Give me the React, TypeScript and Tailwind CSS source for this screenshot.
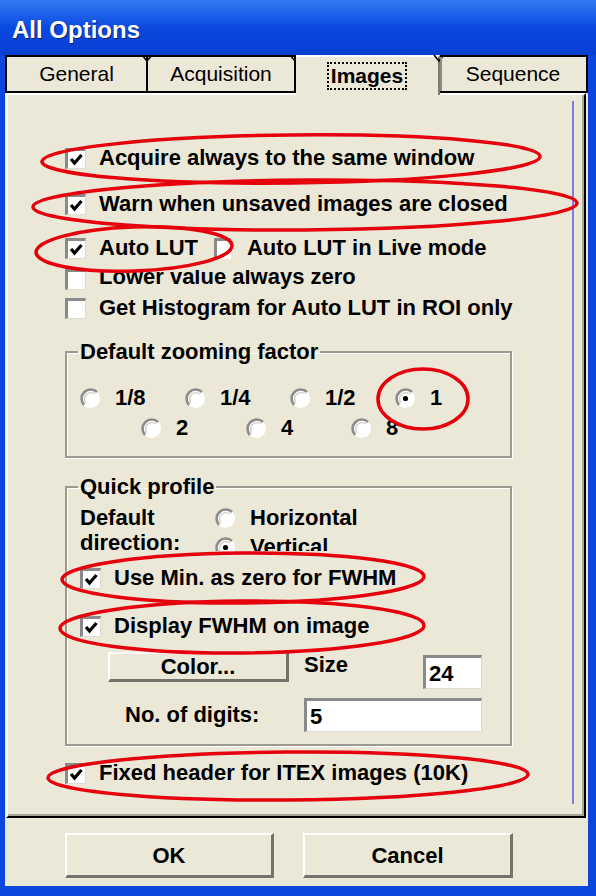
import React from 'react';

const Check = ({ checked = true }: { checked?: boolean }) => (
  <div className="w-[21px] h-[21px] shrink-0 bg-white border-t-[3px] border-l-[3px] border-r border-b border-[#8a8a8a] border-r-[#dedbd0] border-b-[#dedbd0] flex items-center justify-center">
    {checked && (
      <svg width="15" height="15" viewBox="0 0 15 15">
        <path d="M2 7 L5.5 11 L12.5 3" fill="none" stroke="#000" strokeWidth="3.2" />
      </svg>
    )}
  </div>
);

const Radio = ({ on = false }: { on?: boolean }) => (
  <svg width="21" height="21" viewBox="0 0 21 21" className="shrink-0">
    <circle cx="10.5" cy="10.5" r="9.5" fill="#fff" />
    <path d="M17 4 A9.2 9.2 0 0 0 4 17" fill="none" stroke="#8c8c8c" strokeWidth="2.6" />
    <path d="M15 6 A6.4 6.4 0 0 0 6 15" fill="none" stroke="#d2d0c6" strokeWidth="1.4" />
    {on && <circle cx="10.5" cy="10.5" r="2.6" fill="#000" />}
  </svg>
);

const Row = ({ label, checked = true, className = '' }: { label: string; checked?: boolean; className?: string }) => (
  <div className={`flex items-center gap-[13px] h-[24px] ${className}`}>
    <Check checked={checked} />
    <span className="leading-[24px] whitespace-nowrap">{label}</span>
  </div>
);

const Notch = () => (
  <svg width="12" height="8" viewBox="0 0 12 8" className="absolute -right-[7px] -top-[2px]">
    <path d="M1 0 L6 6 L11 0" fill="none" stroke="#000" strokeWidth="1.6" />
  </svg>
);

const Opt = ({ label, on = false }: { label: string; on?: boolean }) => (
  <div className="w-[105px] flex items-center gap-[14px]">
    <Radio on={on} />
    <span className="leading-[22px]">{label}</span>
  </div>
);

export default function App() {
  return (
    <div className="relative w-[596px] h-[896px] overflow-hidden bg-[#0b47dc] font-['Liberation_Sans',Arial,sans-serif] text-black">
      {/* Title bar */}
      <div className="h-[55px] pl-[12px] pt-[16px] bg-gradient-to-b from-[#3479f4] via-[#0a48e0] to-[#083fd2]">
        <span className="text-[24px] leading-[28px] font-bold text-white [text-shadow:1px_1px_0_#0a2270]">All Options</span>
      </div>

      {/* Client area */}
      <div className="ml-[5px] mr-[8px] h-[831px] bg-[#ebe8d8] flex flex-col">
        {/* Tabs */}
        <div className="flex h-[38px] relative z-10">
          <div className="relative w-[143px] border-2 border-black flex items-center justify-center text-[21px]">
            <span>General</span>
            <Notch />
          </div>
          <div className="relative w-[148px] border-2 border-l-0 border-black flex items-center justify-center text-[21px]">
            <span>Acquisition</span>
            <Notch />
          </div>
          <div className="relative w-[144px] h-[40px] border-t-2 border-r-2 border-t-white border-r-[#7d7b70] bg-[#ebe8d8] flex items-center justify-center">
            <span className="text-[21px] font-bold leading-[24px] px-[2px] border-2 border-dotted border-black">Images</span>
            <Notch />
          </div>
          <div className="relative w-[148px] border-2 border-l-0 border-black flex items-center justify-center text-[21px] shadow-[inset_2px_0_0_#8d8b80]">
            <span>Sequence</span>
          </div>
        </div>

        {/* Tab page */}
        <div className="ml-[1px] mr-[2px] h-[725px] border-t-2 border-l-2 border-white border-r-2 border-b-2 border-r-black border-b-black shadow-[inset_-2px_-2px_0_#a9a699] flex text-[22px] font-bold">
          <div className="flex-1 flex flex-col pl-[57px]">
            <Row label="Acquire always to the same window" className="mt-[51px]" />
            <Row label="Warn when unsaved images are closed" className="mt-[22px]" />
            <div className="mt-[20px] flex items-center h-[24px]">
              <Check />
              <span className="ml-[13px] leading-[24px]">Auto LUT</span>
              <div className="ml-[16px] w-[17px] h-[21px] bg-white border-l-[3px] border-t-[3px] border-[#8a8a8a]" />
              <span className="ml-[16px] leading-[24px] whitespace-nowrap">Auto LUT in Live mode</span>
            </div>
            <div className="mt-[7px] flex items-center gap-[13px] h-[24px]">
              <Check checked={false} />
              <div className="h-[19px] overflow-hidden flex items-end">
                <span className="leading-[24px] whitespace-nowrap">Lower value always zero</span>
              </div>
            </div>
            <Row label="Get Histogram for Auto LUT in ROI only" checked={false} className="mt-[5px]" />

            {/* Default zooming factor */}
            <fieldset className="mt-[20px] w-[447px] border-2 border-[#9c9a90] shadow-[1px_1px_0_#fff,inset_1px_1px_0_#fff] pb-[17px]">
              <legend className="ml-[11px] px-[2px] leading-[24px]">Default zooming factor</legend>
              <div className="mt-[23px] h-[22px] flex pl-[13px]">
                <Opt label="1/8" />
                <Opt label="1/4" />
                <Opt label="1/2" />
                <Opt label="1" on />
              </div>
              <div className="mt-[8px] h-[22px] flex pl-[74px]">
                <Opt label="2" />
                <Opt label="4" />
                <Opt label="8" />
              </div>
            </fieldset>

            {/* Quick profile */}
            <fieldset className="mt-[17px] w-[447px] border-2 border-[#9c9a90] shadow-[1px_1px_0_#fff,inset_1px_1px_0_#fff] pb-[12px]">
              <legend className="ml-[11px] px-[2px] leading-[24px]">Quick profile</legend>
              <div className="mt-[7px] h-[47px] flex items-start pl-[13px]">
                <div className="w-[135px] leading-[25px] -mt-[1px]">
                  <div>Default</div>
                  <div>direction:</div>
                </div>
                <div className="h-[45px] overflow-hidden">
                  <div className="h-[24px] flex items-center gap-[14px]">
                    <Radio />
                    <span className="leading-[24px]">Horizontal</span>
                  </div>
                  <div className="mt-[5px] h-[24px] flex items-center gap-[14px]">
                    <Radio on />
                    <span className="leading-[24px]">Vertical</span>
                  </div>
                </div>
              </div>
              <div className="pl-[13px]">
                <Row label="Use Min. as zero for FWHM" className="mt-[13px]" />
                <Row label="Display FWHM on image" className="mt-[24px]" />
              </div>
              <div className="mt-[14px] flex items-start pl-[41px]">
                <button className="w-[181px] h-[30px] bg-[#ebe8d8] border-t-2 border-l-2 border-white border-r-[3px] border-b-[3px] border-r-[#74726a] border-b-[#74726a] font-bold leading-[24px]">
                  Color...
                </button>
                <div className="ml-[15px] w-[119px] leading-[24px] mt-[1px]">Size</div>
                <div className="mt-[3px] w-[59px] h-[34px] bg-white border-t-[3px] border-l-[3px] border-[#8a8a8a] border-r border-b border-r-[#dedbd0] border-b-[#dedbd0] pl-[3px] flex items-center">
                  24
                </div>
              </div>
              <div className="mt-[9px] h-[34px] flex items-center pl-[58px]">
                <div className="w-[179px] leading-[24px]">No. of digits:</div>
                <div className="w-[178px] h-[34px] bg-white border-t-[3px] border-l-[3px] border-[#8a8a8a] border-r border-b border-r-[#dedbd0] border-b-[#dedbd0] pl-[3px] flex items-center">
                  5
                </div>
              </div>
            </fieldset>

            <Row label="Fixed header for ITEX images (10K)" className="mt-[15px]" />
          </div>
          <div className="w-[2px] bg-[#7c7ce8] mt-[6px] mb-[12px] mr-[10px]" />
        </div>

        {/* Buttons */}
        <div className="flex pt-[15px] pl-[60px] gap-[29px] text-[22px] font-bold">
          <button className="w-[209px] h-[45px] bg-[#ebe8d8] border-t-2 border-l-2 border-white border-r-[3px] border-b-[3px] border-r-[#74726a] border-b-[#74726a]">
            OK
          </button>
          <button className="w-[210px] h-[45px] bg-[#ebe8d8] border-t-2 border-l-2 border-white border-r-[3px] border-b-[3px] border-r-[#74726a] border-b-[#74726a]">
            Cancel
          </button>
        </div>
      </div>

      {/* Red annotation ellipses */}
      <svg className="absolute inset-0 pointer-events-none" width="596" height="896" viewBox="0 0 596 896">
        <g fill="none" stroke="#e5000c" strokeWidth="3.5">
          <ellipse cx="291" cy="159" rx="249" ry="24" transform="rotate(-0.6 291 159)" />
          <ellipse cx="305" cy="205" rx="272" ry="25" transform="rotate(-0.4 305 205)" />
          <ellipse cx="134" cy="249" rx="98" ry="22" transform="rotate(-2 134 249)" />
          <ellipse cx="423" cy="399" rx="45" ry="30" />
          <ellipse cx="243" cy="578" rx="181" ry="25" transform="rotate(-0.5 243 578)" />
          <ellipse cx="242" cy="627" rx="182" ry="26" transform="rotate(-0.5 242 627)" />
          <ellipse cx="288" cy="776" rx="240" ry="24" transform="rotate(-0.4 288 776)" />
        </g>
      </svg>
    </div>
  );
}
